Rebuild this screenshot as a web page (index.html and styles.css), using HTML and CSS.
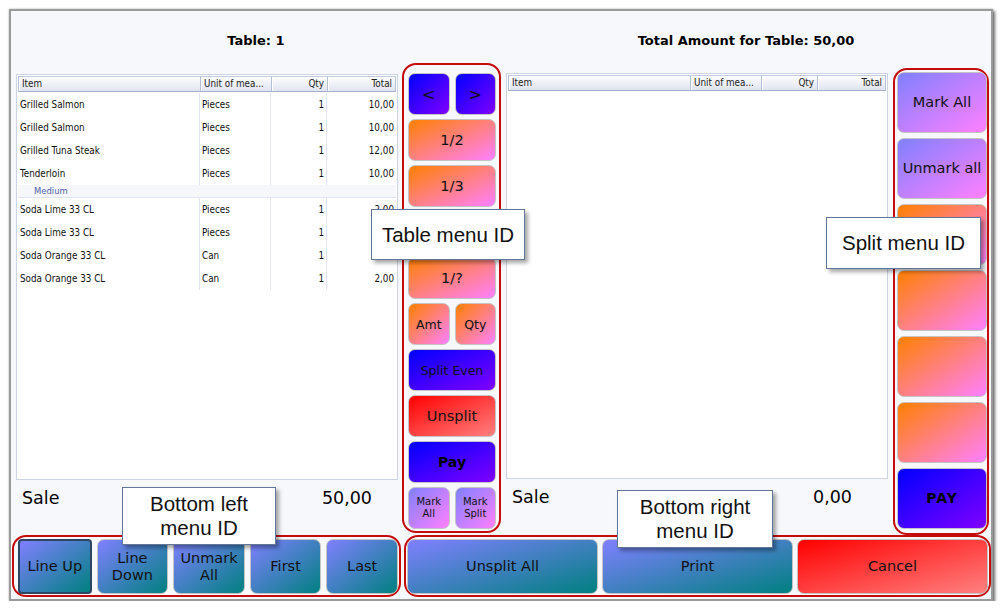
FILE: index.html
```html
<!DOCTYPE html>
<html>
<head>
<meta charset="utf-8">
<title>Split Table</title>
<link rel="stylesheet" href="styles.css">
</head>
<body>
<div class="frame">
  <div class="top">
    <section class="half">
      <h2 class="title">Table: 1</h2>
      <div class="body">
        <div class="panel">
          <div class="grid">
            <div class="ghead"><span>Item</span><span>Unit of mea...</span><span class="r">Qty</span><span class="r">Total</span></div>
            <div class="rows">
              <div class="grow"><span>Grilled Salmon</span><span>Pieces</span><span class="r">1</span><span class="r">10,00</span></div>
              <div class="grow"><span>Grilled Salmon</span><span>Pieces</span><span class="r">1</span><span class="r">10,00</span></div>
              <div class="grow"><span>Grilled Tuna Steak</span><span>Pieces</span><span class="r">1</span><span class="r">12,00</span></div>
              <div class="grow"><span>Tenderloin</span><span>Pieces</span><span class="r">1</span><span class="r">10,00</span></div>
              <div class="gsub">Medium</div>
              <div class="grow"><span>Soda Lime 33 CL</span><span>Pieces</span><span class="r">1</span><span class="r">2,00</span></div>
              <div class="grow"><span>Soda Lime 33 CL</span><span>Pieces</span><span class="r">1</span><span class="r">2,00</span></div>
              <div class="grow"><span>Soda Orange 33 CL</span><span>Can</span><span class="r">1</span><span class="r">2,00</span></div>
              <div class="grow"><span>Soda Orange 33 CL</span><span>Can</span><span class="r">1</span><span class="r">2,00</span></div>
            </div>
          </div>
          <div class="sale"><span>Sale</span><span>50,00</span></div>
        </div>
        <div class="outline menu-mid">
          <div class="pair"><div class="btn blue arrow">&lt;</div><div class="btn blue arrow">&gt;</div></div>
          <div class="btn orange">1/2</div>
          <div class="btn orange">1/3</div>
          <div class="btn orange"></div>
          <div class="btn orange">1/?</div>
          <div class="pair"><div class="btn orange sm">Amt</div><div class="btn orange sm">Qty</div></div>
          <div class="btn blue sm">Split Even</div>
          <div class="btn red">Unsplit</div>
          <div class="btn blue bold">Pay</div>
          <div class="pair"><div class="btn violet xs">Mark<br>All</div><div class="btn violet xs">Mark<br>Split</div></div>
        </div>
      </div>
    </section>
    <section class="half">
      <h2 class="title">Total Amount for Table: 50,00</h2>
      <div class="body">
        <div class="panel">
          <div class="grid">
            <div class="ghead"><span>Item</span><span>Unit of mea...</span><span class="r">Qty</span><span class="r">Total</span></div>
          </div>
          <div class="sale sale-r"><span>Sale</span><span>0,00</span></div>
        </div>
        <div class="outline menu-side">
          <div class="btn violet">Mark All</div>
          <div class="btn violet">Unmark all</div>
          <div class="btn orange"></div>
          <div class="btn orange"></div>
          <div class="btn orange"></div>
          <div class="btn orange"></div>
          <div class="btn blue bold pay">PAY</div>
        </div>
      </div>
    </section>
  </div>
  <div class="bottom">
    <div class="outline bar bar-l">
      <div class="btn teal focus">Line Up</div>
      <div class="btn teal">Line<br>Down</div>
      <div class="btn teal">Unmark<br>All</div>
      <div class="btn teal">First</div>
      <div class="btn teal">Last</div>
    </div>
    <div class="outline bar bar-r">
      <div class="btn teal">Unsplit All</div>
      <div class="btn teal">Print</div>
      <div class="btn red">Cancel</div>
    </div>
  </div>

  <div class="tip tip-table">Table menu ID</div>
  <div class="tip tip-split">Split menu ID</div>
  <div class="tip tip-bl">Bottom left<br>menu ID</div>
  <div class="tip tip-br">Bottom right<br>menu ID</div>
</div>
</body>
</html>
```
FILE: styles.css
```css
body {
  margin: 0;
  background: #ffffff;
  font-family: "DejaVu Sans", sans-serif;
}

.frame {
  position: relative;
  margin: 9px 0 0 9px;
  width: 980px;
  height: 588px;
  border: 2px solid #9a9a9a;
  background: #f7f8fb;
  box-shadow: 2px 2px 3px rgba(0, 0, 0, 0.55), 0 0 2px rgba(0, 0, 0, 0.25);
}

.top {
  display: flex;
  height: 524px;
}

.half {
  width: 490px;
  flex: none;
  display: flex;
  flex-direction: column;
}

.title {
  margin: 0;
  height: 52px;
  box-sizing: border-box;
  padding-top: 22px;
  font: bold 13px/16px "DejaVu Sans", sans-serif;
  text-align: center;
  color: #000;
}

.body {
  display: flex;
  align-items: flex-start;
}

.panel {
  width: 382px;
  flex: none;
  margin: 11px 0 0 5px;
}

/* grid */
.grid {
  box-sizing: border-box;
  height: 406px;
  border: 1px solid #cdd4e4;
  background: #fff;
  padding: 1px;
  font-family: "DejaVu Sans Condensed", "DejaVu Sans", sans-serif;
  font-stretch: semi-condensed;
  font-size: 9.8px;
  color: #111;
}

.ghead {
  display: grid;
  grid-template-columns: 182px 71px 56px 1fr;
  height: 16px;
  box-sizing: border-box;
  background: linear-gradient(#fcfdfe, #e0e4ef);
  border-top: 1px solid #c3cbdf;
  border-bottom: 1px solid #a5b1cc;
  border-left: 1px solid #b3bed7;
}

.ghead span {
  line-height: 14px;
  padding: 0 3px;
  border-right: 1px solid #b3bed7;
  box-shadow: inset 1px 0 0 #ffffff;
  white-space: nowrap;
  overflow: hidden;
  color: #222;
}

.r {
  text-align: right;
}

.rows {
  margin-top: 1px;
}

.grow {
  display: grid;
  grid-template-columns: 182px 71px 56px 1fr;
  height: 23px;
  line-height: 23px;
}

.grow span {
  padding: 0 2px;
  border-right: 1px solid #e0e5f2;
  white-space: nowrap;
  overflow: hidden;
}

.grow span:last-child {
  border-right: 0;
}

.grow span.r {
  padding-right: 2px;
}

.gsub {
  height: 13px;
  line-height: 12px;
  box-sizing: border-box;
  padding-left: 16px;
  font-size: 9.4px;
  color: #4f5fb0;
  background: #f6f7fb;
  border-bottom: 1px solid #e0e5f2;
}

.sale {
  display: flex;
  justify-content: space-between;
  height: 36px;
  line-height: 37px;
  font-size: 17.5px;
  padding: 0 26px 0 6px;
  color: #000;
}

.sale-r {
  padding-right: 36px;
}

/* red annotation outlines */
.outline {
  box-sizing: border-box;
  border: 2px solid #c40c0c;
  border-radius: 14px;
  flex: none;
}

.menu-mid {
  margin-left: 4px;
  width: 99px;
  height: 470px;
  display: flex;
  flex-direction: column;
  gap: 4px;
  padding: 8px 3px 2px 4px;
}

.menu-mid > .btn,
.menu-mid > .pair {
  height: 42px;
  flex: none;
}

.pair {
  display: flex;
  gap: 5px;
}

.pair .btn {
  flex: 1;
}

.menu-side {
  margin: 6px 0 0 5px;
  width: 96px;
  height: 467px;
  display: flex;
  flex-direction: column;
  gap: 5px;
  padding: 2px 0 4px 2px;
}

.menu-side .btn {
  height: 61px;
  flex: none;
}

/* buttons */
.btn {
  box-sizing: border-box;
  border: 1px solid #c4c4c4;
  border-radius: 7px;
  display: flex;
  align-items: center;
  justify-content: center;
  text-align: center;
  color: #111;
  font-size: 14.5px;
  line-height: 17px;
}

.arrow {
  font-size: 16px;
}

.sm {
  font-size: 12.5px;
}

.xs {
  font-size: 10px;
  line-height: 12.5px;
}

.bold {
  font-weight: bold;
  font-size: 14px;
  color: #000;
}

.pay {
  letter-spacing: 1px;
}

.orange {
  background: linear-gradient(to bottom right, #ff8000, #ff80ff);
}

.blue {
  background: linear-gradient(to bottom right, #0000ff, #8000ff);
}

.red {
  background: linear-gradient(to bottom right, #ff0000, #ff8080);
}

.violet {
  background: linear-gradient(to bottom right, #8080ff, #ff80ff);
}

.teal {
  background: linear-gradient(to bottom right, #8080ff, #008080);
}

.focus {
  border: 2px solid #2c4563;
  border-radius: 4px;
}

/* bottom bars */
.bottom {
  display: flex;
  gap: 3px;
  margin-left: 1px;
}

.bar {
  height: 62px;
  display: flex;
}

.bar .btn {
  flex: 1;
}

.bar-l {
  width: 389px;
  gap: 5px;
  padding: 2px 1px 1px 4px;
}

.bar-r {
  width: 587px;
  gap: 4px;
  padding: 2px 1px 1px 1px;
}

/* annotation labels */
.tip {
  position: absolute;
  z-index: 5;
  box-sizing: border-box;
  background: #fff;
  border: 1px solid #62769a;
  box-shadow: 3px 3px 4px rgba(0, 0, 0, 0.35);
  font: 20.5px/24px "Liberation Sans", Arial, sans-serif;
  color: #111;
  display: flex;
  align-items: center;
  justify-content: center;
  text-align: center;
}

.tip-table {
  left: 360px;
  top: 198px;
  width: 154px;
  height: 51px;
}

.tip-split {
  left: 815px;
  top: 206px;
  width: 155px;
  height: 52px;
}

.tip-bl {
  left: 111px;
  top: 476px;
  width: 154px;
  height: 58px;
}

.tip-br {
  left: 606px;
  top: 479px;
  width: 156px;
  height: 58px;
}
```
